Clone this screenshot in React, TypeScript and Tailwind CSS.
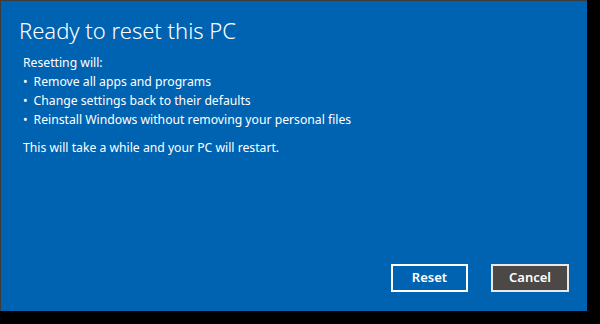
export default function App() {
  return (
    <div className="w-[600px] h-[324px] bg-black overflow-hidden">
      <div className="w-[587px] h-[311px] bg-[#0063b1] border-t border-l border-[#3c3c3c] flex flex-col pl-[22px] pr-[18px] text-white font-['Noto_Sans',sans-serif]">
        <h1 className="mt-[14px] -ml-[4px] text-[22px] font-light leading-[30px]">Ready to reset this PC</h1>
        <div className="mt-[8px] text-[12.2px] leading-[19px]">
          <p>Resetting will:</p>
          <ul>
            <li className="flex gap-[6px]"><span>•</span><span>Remove all apps and programs</span></li>
            <li className="flex gap-[6px]"><span>•</span><span>Change settings back to their defaults</span></li>
            <li className="flex gap-[6px]"><span>•</span><span>Reinstall Windows without removing your personal files</span></li>
          </ul>
          <p className="mt-[9px]">This will take a while and your PC will restart.</p>
        </div>
        <div className="mt-auto mb-[19px] flex justify-end gap-[23px]">
          <button className="w-[77px] h-[28px] border-2 border-white text-[13px] font-semibold">Reset</button>
          <button className="w-[78px] h-[28px] border-2 border-[#e8e8e8] bg-[#4c4846] text-[13px] font-semibold">Cancel</button>
        </div>
      </div>
    </div>
  );
}
